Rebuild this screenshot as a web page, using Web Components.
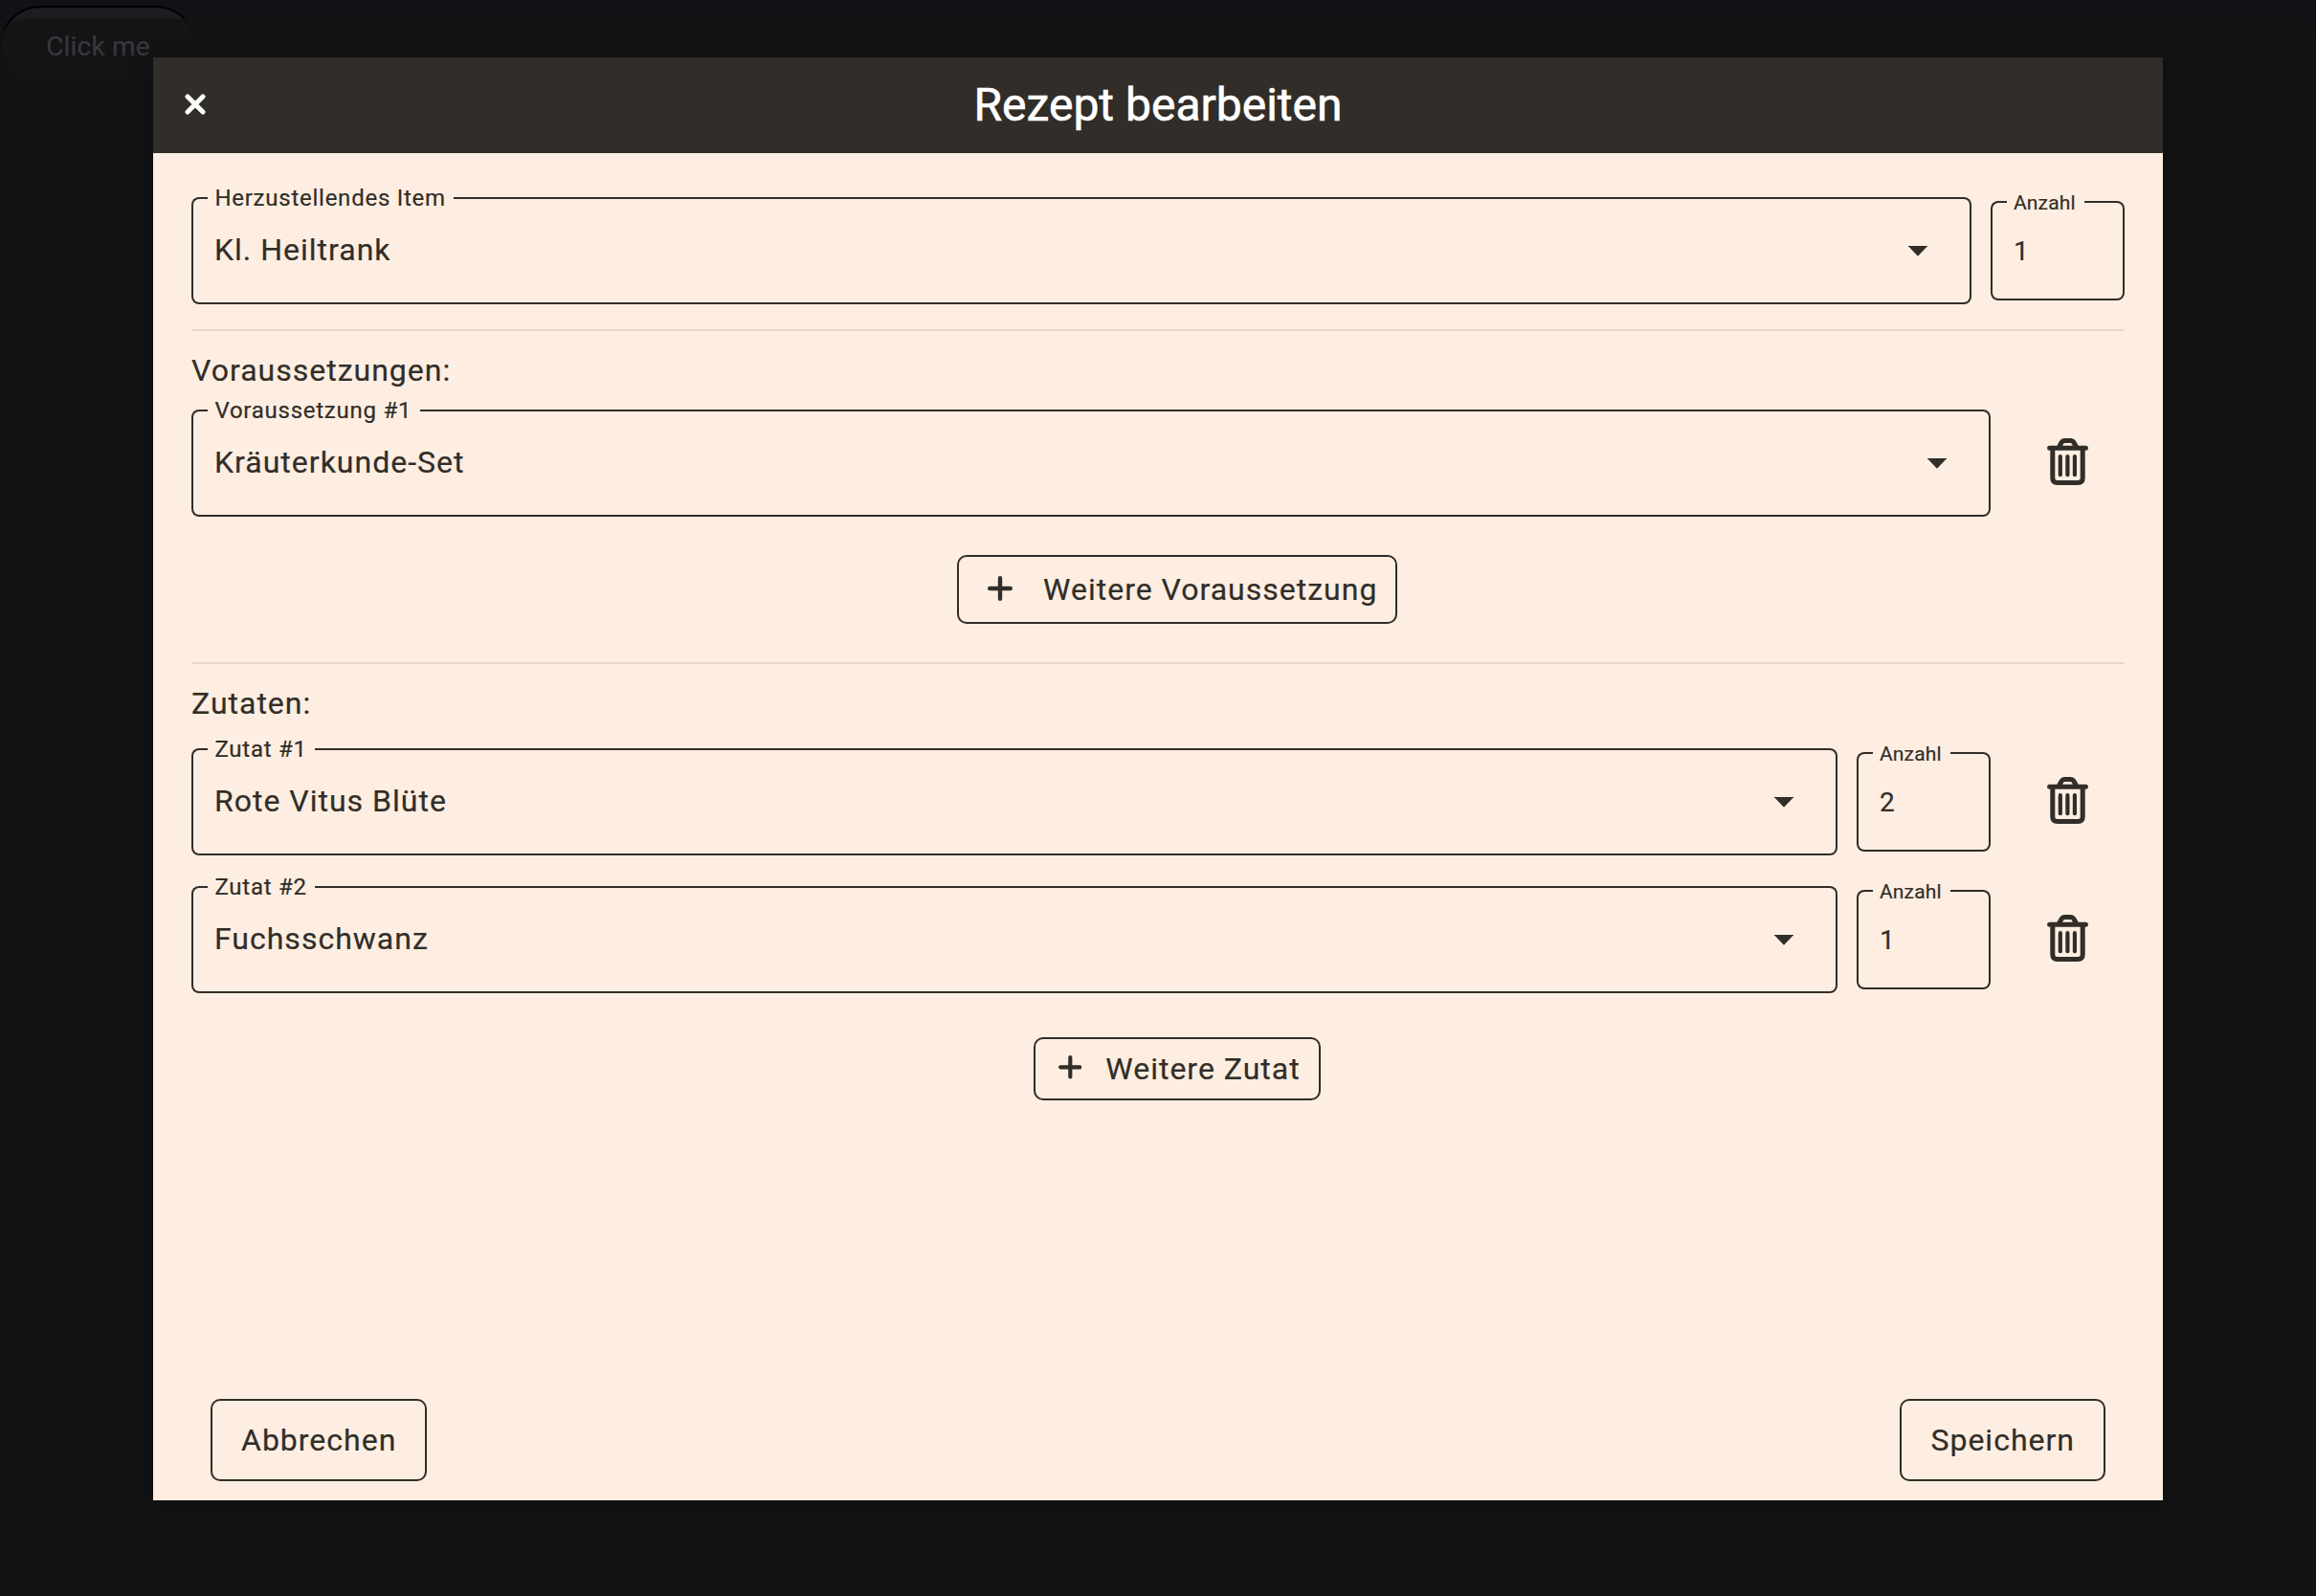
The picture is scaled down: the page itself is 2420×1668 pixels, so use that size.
<!DOCTYPE html>
<html lang="de">
<head>
<meta charset="utf-8">
<title>Rezept bearbeiten</title>
<style>
  html, body { margin: 0; height: 100%; }
  body { background: #131116; font-family: Roboto, sans-serif; -webkit-text-stroke: .2px; overflow: hidden; }
</style>
</head>
<body>
<story-page>
  <pill-button slot="trigger">Click me</pill-button>
  <recipe-dialog heading="Rezept bearbeiten">
    <form-row>
      <select-field label="Herzustellendes Item">Kl. Heiltrank</select-field>
      <count-field>1</count-field>
    </form-row>
    <form-section heading="Voraussetzungen:" style="--after-heading:17px; --before-section:26px">
      <form-row>
        <select-field label="Voraussetzung #1">Kräuterkunde-Set</select-field>
        <delete-button></delete-button>
      </form-row>
      <add-button slot="more" style="--h:72px; --icon-box:91px; --icon:26px; margin-top:40px">Weitere Voraussetzung</add-button>
    </form-section>
    <form-section heading="Zutaten:" style="--after-heading:23px; --before-section:40px">
      <form-row>
        <select-field label="Zutat #1">Rote Vitus Blüte</select-field>
        <count-field>2</count-field>
        <delete-button></delete-button>
      </form-row>
      <form-row>
        <select-field label="Zutat #2">Fuchsschwanz</select-field>
        <count-field>1</count-field>
        <delete-button></delete-button>
      </form-row>
      <add-button slot="more" style="--h:66px; --icon-box:75.5px; --icon:24.6px; margin-top:46px">Weitere Zutat</add-button>
    </form-section>
    <outline-button slot="actions">Abbrechen</outline-button>
    <outline-button slot="actions">Speichern</outline-button>
  </recipe-dialog>
</story-page>
<script>
  const define = (name, render) => customElements.define(name, class extends HTMLElement {
    constructor() {
      super();
      this.attachShadow({ mode: 'open' }).innerHTML =
        '<style>*{box-sizing:border-box}:host{box-sizing:border-box}</style>' + render(this);
    }
  });

  define('story-page', () => `
    <style>
      :host { display: block; position: relative; height: 1668px; padding-top: 6px; }
      .backdrop { position: absolute; inset: 20px 0 0 0; z-index: 1; border-radius: 24px 24px 0 0; background: rgba(20,20,20,.87); }
      .center { position: absolute; inset: 0; z-index: 3; display: flex; justify-content: center; align-items: flex-start; padding-top: 60px; }
    </style>
    <slot name="trigger"></slot>
    <div class="backdrop"></div>
    <div class="center"><slot></slot></div>`);

  define('pill-button', () => `
    <style>
      :host { display: flex; align-items: center; justify-content: center; width: 205px; height: 84px;
        border: 2px solid #000; border-radius: 42px; background: #1d1c21; color: #3a3641;
        font-size: 28px; letter-spacing: .2px; }
      span { position: relative; z-index: 2; }
    </style><span><slot></slot></span>`);

  define('recipe-dialog', el => `
    <style>
      :host { display: flex; flex-direction: column; width: 2100px; height: 1508px; background: #fdeee1; color: #312d28;
        font-size: 32px; letter-spacing: 1px; box-shadow: 0 4px 24px rgba(0,0,0,.34); }
      header { display: grid; grid-template-columns: 88px 1fr 88px; align-items: center; height: 100px; background: #312d28; color: #fff; }
      header svg { justify-self: center; margin-top: -3px; }
      h1 { margin: 0; font-size: 48px; font-weight: 400; letter-spacing: 0; line-height: 100px; text-align: center; -webkit-text-stroke: .6px; }
      main { flex: 1; padding: 46px 40px 0; }
      footer { display: flex; justify-content: space-between; padding: 0 60px 20px; }
    </style>
    <header>
      <svg width="22" height="22" viewBox="0 0 22 22" fill="none" stroke="#fff" stroke-width="5" stroke-linecap="round"><path d="M3 3L19 19M19 3L3 19"/></svg>
      <h1>${el.getAttribute('heading')}</h1>
    </header>
    <main><slot></slot></main>
    <footer><slot name="actions"></slot></footer>`);

  define('form-row', () => `
    <style>:host { display: flex; align-items: center; gap: 20px; }</style><slot></slot>`);

  define('form-section', el => `
    <style>
      :host { display: block; margin-top: var(--before-section); border-top: 2px solid #e6d8c7; padding-top: 17px; }
      h2 { margin: 0 0 var(--after-heading); font-size: 32px; font-weight: 400; line-height: 48px; }
      .rows { display: flex; flex-direction: column; gap: 32px; }
      .more { display: flex; justify-content: center; padding-left: 40px; }
    </style>
    <h2>${el.getAttribute('heading')}</h2>
    <div class="rows"><slot></slot></div>
    <div class="more"><slot name="more"></slot></div>`);

  /* Outline split in three parts so that the label sits in a gap of the top border. */
  const outline = label => `
    <style>
      .outline, .content { grid-area: 1 / 1; }
      .outline { display: flex; }
      .lead { width: 17px; border: 2px solid; border-right: 0; border-radius: 8px 0 0 8px; }
      .notch { border-bottom: 2px solid; padding: 0 8.6px 0 7.4px; }
      .trail { flex: 1; border: 2px solid; border-left: 0; border-radius: 0 8px 8px 0; }
      .notch span { display: block; line-height: 32px; margin-top: -15px; white-space: nowrap; }
      .content { display: flex; justify-content: space-between; padding-left: 24px; }
    </style>
    <div class="outline"><div class="lead"></div><div class="notch"><span>${label}</span></div><div class="trail"></div></div>`;

  define('select-field', el => outline(el.getAttribute('label')) + `
    <style>
      :host { display: grid; flex: 1; height: 112px; }
      .notch { font-size: 24px; letter-spacing: .75px; }
      .content { line-height: 110px; padding-right: 46px; }
      svg { margin-top: 51px; }
    </style>
    <div class="content"><slot></slot>
      <svg width="20" height="11" viewBox="0 0 20 11"><path d="M-.2 0H20.2L10 10.7Z" fill="currentColor"/></svg>
    </div>`);

  define('count-field', () => outline('Anzahl') + `
    <style>
      :host { display: grid; grid-template-rows: 104px; width: 140px; height: 104px; font-size: 28px; letter-spacing: .15px; }
      .notch { font-size: 21px; padding: 0 9px 0 7px; }
      .notch span { margin-top: -14px; }
      .content { line-height: 106px; }
    </style>
    <div class="content"><slot></slot></div>`);

  define('delete-button', () => `
    <style>:host { display: flex; justify-content: center; width: 120px; } svg { margin-top: -3px; }</style>
    <svg width="43" height="49" viewBox="0 0 43 49" fill="none" stroke="currentColor" stroke-width="5" stroke-linecap="round" stroke-linejoin="round">
      <path d="M2.6 10.3H40.4M5.8 11V41.5Q5.8 46.5 10.8 46.5H32.2Q37.2 46.5 37.2 41.5V11M12.5 9L14.6 5.2Q16 2.6 18.6 2.6H24.4Q27 2.6 28.4 5.2L30.5 9"/>
      <path stroke-width="4.2" d="M13.8 19.2V38.2M21.4 19.2V38.2M28.9 19.2V38.2"/>
    </svg>`);

  define('add-button', () => `
    <style>
      :host { display: flex; align-items: center; height: var(--h); padding-right: 21px; border-radius: 10px; box-shadow: inset 0 0 0 2px #312d28; }
      i { display: flex; justify-content: center; width: var(--icon-box); margin-top: -3px; }
      svg { width: var(--icon); height: var(--icon); }
      span { margin-left: -.6px; }
    </style>
    <i><svg viewBox="0 0 26 26" fill="none" stroke="currentColor" stroke-width="4.4" stroke-linecap="round"><path d="M13 2.2V23.8M2.2 13H23.8"/></svg></i>
    <span><slot></slot></span>`);

  define('outline-button', () => `
    <style>:host { display: flex; align-items: center; height: 86px; padding: 0 30px; border: 2px solid; border-radius: 10px; }</style>
    <slot></slot>`);
</script>
</body>
</html>
